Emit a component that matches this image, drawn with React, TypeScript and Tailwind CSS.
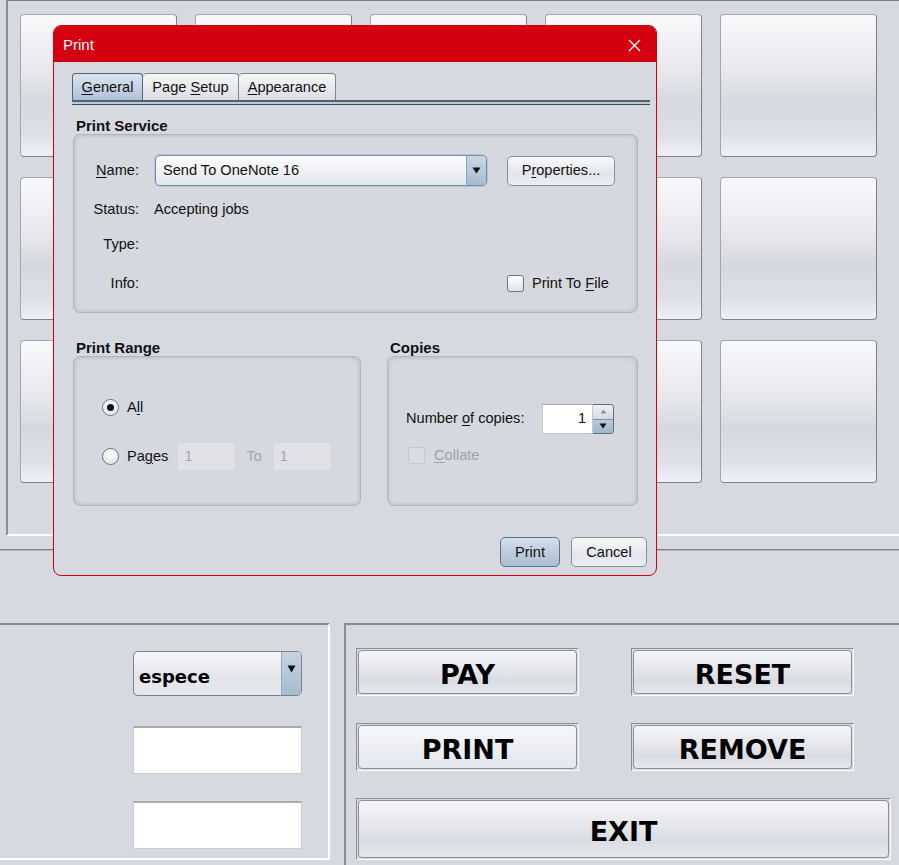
import React from "react";

const U = ({ c }: { c: string }) => <span className="underline underline-offset-[2px] decoration-1">{c}</span>;

function Tile() {
  return (
    <div className="h-[143px] rounded-[4px] border border-[#a3a6ab] border-r-[#7f8287] border-b-[#7f8287] bg-[linear-gradient(to_bottom,#f8f9fb_0%,#e6e8ec_40%,#d5d8de_62%,#dde0e7_85%,#eff1f7_100%)]" />
  );
}

function BigButton({ label, wide, light }: { label: string; wide?: boolean; light?: boolean }) {
  return (
    <div className={`${wide ? "w-[535px] h-[62px]" : "w-[223px] h-[48px]"} border border-[#8b8e93] border-r-white border-b-white p-[1px]`}>
      <div
        className={`h-full w-full rounded-[4px] border border-[#8d9095] flex items-center justify-center pt-[6px] font-['DejaVu_Sans',sans-serif] font-bold text-[27px] text-black ${
          light
            ? "bg-[linear-gradient(to_bottom,#f7f8fb_0%,#eceef3_50%,#e4e7ee_100%)]"
            : "bg-[linear-gradient(to_bottom,#f4f5f7_0%,#e3e5e9_50%,#d9dce2_70%,#e6e8ed_100%)]"
        }`}
      >
        {label}
      </div>
    </div>
  );
}

function Radio({ checked }: { checked?: boolean }) {
  return (
    <div className="w-[17px] h-[17px] rounded-full border border-[#6b727c] bg-[radial-gradient(circle_at_50%_35%,#ffffff_0%,#e9ecf0_55%,#c9ced6_100%)] flex items-center justify-center shadow-[inset_0_0_0_1px_rgba(255,255,255,0.6)]">
      {checked && <div className="w-[7px] h-[7px] rounded-full bg-[#111]" />}
    </div>
  );
}

function Check({ disabled }: { disabled?: boolean }) {
  return (
    <div
      className={`w-[17px] h-[17px] rounded-[3px] border ${
        disabled ? "border-[#c3c6cc] bg-[#d9dce1]" : "border-[#6f757e] bg-[linear-gradient(to_bottom,#ffffff,#dfe2e7)]"
      }`}
    />
  );
}

function GroupBox({ className, children }: { className?: string; children?: React.ReactNode }) {
  return (
    <div
      className={`rounded-[7px] border border-[#b2b5bb] shadow-[inset_0_0_4px_rgba(0,0,0,0.18)] bg-[#d5d8de] ${className ?? ""}`}
    >
      {children}
    </div>
  );
}

function Dialog() {
  return (
    <div className="absolute left-[53px] top-[25px] w-[604px] h-[551px] rounded-[8px] border border-[#d4000f] bg-[#d6d9df] overflow-hidden flex flex-col font-['Liberation_Sans',Arial,sans-serif] text-[14.6px] text-[#111]">
      <div className="h-[37px] shrink-0 bg-[#d4000f] flex items-center justify-between pl-[9px] pr-[16px] pt-[3px] -mt-px -mx-px">
        <span className="text-white text-[15px] pl-px">Print</span>
        <svg width="13" height="13" viewBox="0 0 13 13">
          <path d="M1 1 L12 12 M12 1 L1 12" stroke="white" strokeWidth="1.4" />
        </svg>
      </div>
      <div className="flex-1 pl-[18px] pr-[6px] pt-[11px] flex flex-col">
        {/* tabs */}
        <div className="flex h-[27px] items-end">
          <div className="h-[27px] w-[71px] rounded-t-[4px] border border-b-0 border-[#55626f] bg-[linear-gradient(to_bottom,#dbe5ef,#aec2d6)] flex items-center justify-center pt-[2px]">
            <span><U c="G" />eneral</span>
          </div>
          <div className="h-[27px] w-[96px] rounded-t-[4px] border border-b-0 border-l-0 border-[#80858d] bg-[linear-gradient(to_bottom,#f6f7f9,#dadde3)] flex items-center justify-center pt-[2px]">
            <span>Page <U c="S" />etup</span>
          </div>
          <div className="h-[27px] w-[97px] rounded-t-[4px] border border-b-0 border-l-0 border-[#80858d] bg-[linear-gradient(to_bottom,#f6f7f9,#dadde3)] flex items-center justify-center pt-[2px]">
            <span><U c="A" />ppearance</span>
          </div>
        </div>
        <div className="h-[5px] border-t-2 border-b border-t-[#596069] border-b-[#3f4a57] bg-[#b8cbe0]" />

        <div className="pl-px pr-[12px] flex flex-col">
          <div className="mt-[12px] h-[17px] leading-[17px] font-bold text-[15px] pl-[3px]">Print Service</div>
          <GroupBox className="h-[179px] pt-[20px]">
            <div className="grid grid-cols-[65px_332px_auto] gap-x-[16px] grid-rows-[31px_48px_22px_56px] items-center">
              <div className="text-right"><U c="N" />ame:</div>
              <div className="h-[31px] rounded-[5px] border border-[#6f8fb0] shadow-[0_0_0_1px_rgba(130,160,195,0.35)] bg-[linear-gradient(to_bottom,#fbfcfd,#e3e6eb)] flex items-center overflow-hidden">
                <span className="flex-1 pl-[7px]">Send To OneNote 16</span>
                <div className="w-[20px] h-full border-l border-[#8ea4bb] bg-[linear-gradient(to_bottom,#c9d7e5,#a7bcd1)] flex items-center justify-center">
                  <svg width="9" height="7" viewBox="0 0 9 7"><path d="M0.5 0.5 H8.5 L4.5 6.5 Z" fill="#111" /></svg>
                </div>
              </div>
              <div className="ml-[4px] w-[108px] h-[30px] rounded-[5px] border border-[#8a8f96] bg-[linear-gradient(to_bottom,#f8f9fa,#e2e5ea_60%,#eceef2)] flex items-center justify-center">
                <span>P<U c="r" />operties...</span>
              </div>

              <div className="text-right">Status:</div>
              <div className="-ml-[1px]">Accepting jobs</div>
              <div />

              <div className="text-right">Type:</div>
              <div />
              <div />

              <div className="text-right">Info:</div>
              <div />
              <div className="ml-[4px] flex items-center">
                <Check />
                <span className="ml-[8px]">Print To <U c="F" />ile</span>
              </div>
            </div>
          </GroupBox>

          <div className="mt-[26px] flex gap-[26px]">
            <div className="w-[288px] flex flex-col">
              <div className="h-[17px] leading-[17px] font-bold text-[15px] pl-[3px]">Print Range</div>
              <GroupBox className="h-[150px] pl-[28px] pt-[36px] flex flex-col gap-[20px]">
                <div className="h-[29px] flex items-center">
                  <Radio checked />
                  <span className="ml-[8px]">A<U c="l" />l</span>
                </div>
                <div className="h-[29px] flex items-center">
                  <Radio />
                  <span className="ml-[8px]">Pa<U c="g" />es</span>
                  <div className="ml-[9px] w-[59px] h-[29px] bg-[#dfe1e6] border border-[#d2d5da] flex items-center pl-[6px] text-[#a3a6ab]">1</div>
                  <span className="ml-[10px] text-[#a3a6ab]">To</span>
                  <div className="ml-[11px] w-[59px] h-[29px] bg-[#dfe1e6] border border-[#d2d5da] flex items-center pl-[6px] text-[#a3a6ab]">1</div>
                </div>
              </GroupBox>
            </div>
            <div className="w-[251px] flex flex-col">
              <div className="h-[17px] leading-[17px] font-bold text-[15px] pl-[3px]">Copies</div>
              <GroupBox className="h-[150px] pt-[47px] flex flex-col">
                <div className="h-[30px] flex items-center justify-between pl-[18px] pr-[23px]">
                  <span>Number <U c="o" />f copies:</span>
                  <div className="flex h-[30px]">
                    <div className="w-[51px] h-full bg-white border border-[#c3c6cb] border-t-[#a5a8ad] flex items-center justify-end pr-[6px]">1</div>
                    <div className="w-[21px] h-full flex flex-col rounded-r-[4px] overflow-hidden border border-[#5e6f81] border-l-0">
                      <div className="flex-1 bg-[linear-gradient(to_bottom,#eef1f4,#d3dae2)] flex items-center justify-center border-b border-[#7f90a3]">
                        <svg width="7" height="5" viewBox="0 0 7 5"><path d="M3.5 0.5 L6.5 4.5 H0.5 Z" fill="#8f969e" /></svg>
                      </div>
                      <div className="flex-1 bg-[linear-gradient(to_bottom,#b9cadb,#9fb5cb)] flex items-center justify-center">
                        <svg width="8" height="6" viewBox="0 0 8 6"><path d="M0.5 0.5 H7.5 L4 5.5 Z" fill="#111" /></svg>
                      </div>
                    </div>
                  </div>
                </div>
                <div className="mt-[11px] pl-[20px] flex items-center">
                  <Check disabled />
                  <span className="ml-[9px] text-[#a0a3a8]"><U c="C" />ollate</span>
                </div>
              </GroupBox>
            </div>
          </div>
        </div>

        <div className="mt-[31px] flex justify-end gap-[11px] pr-[3px]">
          <div className="w-[60px] h-[30px] rounded-[5px] border border-[#5f7286] bg-[linear-gradient(to_bottom,#d3dfeb,#a9bdd1)] flex items-center justify-center pt-px">Print</div>
          <div className="w-[76px] h-[30px] rounded-[5px] border border-[#8a8f96] bg-[linear-gradient(to_bottom,#f8f9fa,#e2e5ea_60%,#eceef2)] flex items-center justify-center pt-px">Cancel</div>
        </div>
      </div>
    </div>
  );
}

export default function App() {
  return (
    <div className="relative w-[899px] h-[865px] overflow-hidden bg-[#d6d9df]">
      {/* top area */}
      <div className="h-[549px] pl-[6px]">
        <div className="h-[536px] border-t border-l-2 border-t-[#7a7d83] border-l-[#8a8d93] border-b-2 border-b-white pt-[13px] pl-[12px]">
          <div className="grid grid-cols-[repeat(5,157px)] gap-x-[18px] gap-y-[20px]">
            {Array.from({ length: 15 }).map((_, i) => (
              <Tile key={i} />
            ))}
          </div>
        </div>
      </div>
      <div className="h-[2px] border-t border-[#7c7f85] bg-[#b4b7bd]" />

      {/* bottom area */}
      <div className="mt-[72px] flex gap-[14px]">
        <div className="w-[330px] h-[237px] border-t-2 border-t-[#8a8d93] border-r-2 border-r-white border-b-2 border-b-white pl-[133px] pr-[26px] pt-[26px] flex flex-col">
          <div className="w-[169px] h-[45px] rounded-[5px] border border-[#7e8186] bg-[linear-gradient(to_bottom,#f6f7f9,#e1e4e9_60%,#e7e9ed)] flex items-center overflow-hidden">
            <span className="flex-1 pl-[5px] font-['DejaVu_Sans',sans-serif] font-bold text-[18px] text-black pt-[6px]">espece</span>
            <div className="w-[20px] h-full border-l border-[#98abbe] bg-[linear-gradient(to_bottom,#c6d4e2,#a7bbcf)] flex items-start justify-center pt-[13px]">
              <svg width="9" height="8" viewBox="0 0 9 8"><path d="M0.5 0.5 H8.5 L4.5 7.5 Z" fill="#111" /></svg>
            </div>
          </div>
          <div className="mt-[30px] w-[169px] h-[48px] bg-white border border-[#c9cbcf] border-t-2 border-t-[#a9abaf]" />
          <div className="mt-[27px] w-[169px] h-[48px] bg-white border border-[#c9cbcf] border-t-2 border-t-[#a9abaf]" />
        </div>
        <div className="flex-1 h-[260px] border-t-2 border-t-[#8a8d93] border-l-2 border-l-[#8a8d93] pl-[10px] pt-[23px]">
          <div className="grid grid-cols-[223px_223px] gap-x-[52px] gap-y-[27px]">
            <BigButton label="PAY" />
            <BigButton label="RESET" />
            <BigButton label="PRINT" light />
            <BigButton label="REMOVE" />
          </div>
          <div className="mt-[27px]">
            <BigButton label="EXIT" wide />
          </div>
        </div>
      </div>

      <Dialog />
    </div>
  );
}
